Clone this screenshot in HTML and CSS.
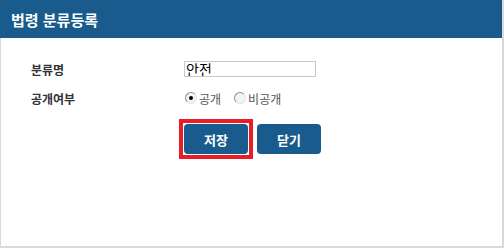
FILE: index.html
```html
<!DOCTYPE html>
<html lang="ko">
<head>
<meta charset="utf-8">
<link rel="stylesheet" href="styles.css">
</head>
<body>
<div class="win">
  <div class="hd">법령 분류등록</div>
  <div class="bd">
    <div class="form">
      <div class="lbl">분류명</div>
      <div class="val"><input class="txt" type="text" value="안전"></div>
      <div class="lbl">공개여부</div>
      <div class="val radios">
        <label class="opt"><span class="rd on"></span>공개</label>
        <label class="opt"><span class="rd"></span>비공개</label>
      </div>
    </div>
    <div class="btns">
      <span class="hl"><button class="btn">저장</button></span>
      <button class="btn">닫기</button>
    </div>
  </div>
</div>
</body>
</html>
```

FILE: styles.css
```css
html, body {
  margin: 0;
  padding: 0;
  background: #fff;
}
body {
  font-family: "Noto Sans CJK KR", "Noto Sans", sans-serif;
}
.win {
  width: 504px;
  height: 248px;
  box-sizing: border-box;
  display: flex;
  flex-direction: column;
  border-right: 2px solid #dadada;
  border-bottom: 2px solid #dadada;
}
.hd {
  height: 38px;
  flex: none;
  background: #185b8c;
  color: #fff;
  font-size: 15px;
  font-weight: bold;
  padding-left: 11px;
  display: flex;
  align-items: center;
}
.bd {
  flex: 1;
  border-left: 1px solid #dadada;
  padding: 19px 0 0 30px;
}
.form {
  display: grid;
  grid-template-columns: 153px auto;
  grid-auto-rows: 24px;
  row-gap: 5px;
  align-items: center;
}
.lbl {
  font-size: 12px;
  font-weight: bold;
  color: #333;
}
.val {
  display: flex;
  align-items: center;
}
.txt {
  width: 132px;
  height: 16px;
  box-sizing: border-box;
  border: 1px solid #c8c8c8;
  padding: 0 1px;
  margin: 0;
  font-family: "Noto Sans CJK KR", sans-serif;
  font-size: 14px;
  color: #000;
  outline: none;
}
.radios {
  gap: 13px;
  padding-left: 1px;
}
.opt {
  display: flex;
  align-items: center;
  gap: 2px;
  font-size: 12px;
  color: #555;
}
.rd {
  width: 12px;
  height: 12px;
  box-sizing: border-box;
  border-radius: 50%;
  border: 1px solid #8e8e8e;
  border-right-color: #e2e2e2;
  border-bottom-color: #e2e2e2;
  background: #f4f4f4;
  display: flex;
  align-items: center;
  justify-content: center;
}
.rd.on::after {
  content: "";
  width: 4px;
  height: 4px;
  border-radius: 50%;
  background: #000;
}
.btns {
  margin: 9px 0 0 148px;
  display: flex;
  align-items: center;
  gap: 4px;
}
.hl {
  display: flex;
  border: 4px solid #e81d25;
  padding: 1px;
}
.btn {
  width: 64px;
  height: 30px;
  border: none;
  border-radius: 4px;
  background: #185b8c;
  color: #fff;
  font-family: "Noto Sans CJK KR", sans-serif;
  font-size: 13px;
  font-weight: bold;
  padding: 0;
  margin: 0;
}
```
